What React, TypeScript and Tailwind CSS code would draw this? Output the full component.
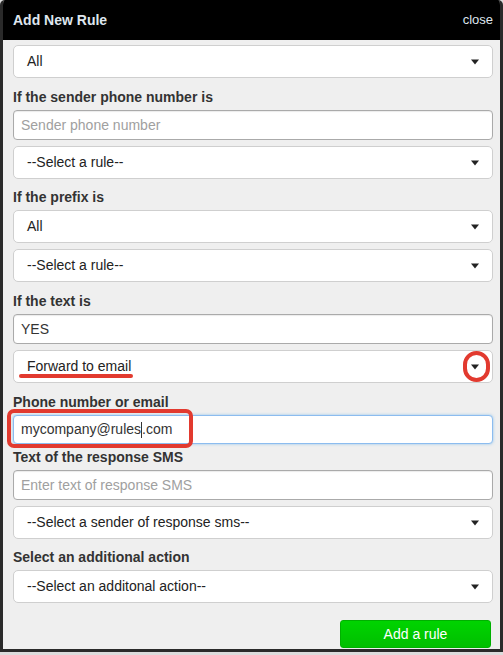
import React from "react";

const font = { fontFamily: '"Liberation Sans", Arial, sans-serif' };

const Caret = () => (
  <span className="absolute right-[13px] top-1/2 -translate-y-1/2 w-0 h-0 border-l-[4px] border-r-[4px] border-t-[5px] border-l-transparent border-r-transparent border-t-[#222]" />
);

const Select = ({ value, className = "" }: { value: string; className?: string }) => (
  <div
    className={`relative flex items-center h-[33px] pl-[13px] bg-white border border-[#cfcfcf] rounded-[5px] text-[14px] text-[#222] ${className}`}
  >
    {value}
    <Caret />
  </div>
);

const Input = ({
  value,
  placeholder,
  className = "",
}: {
  value?: string;
  placeholder?: string;
  className?: string;
}) => (
  <div
    className={`flex items-center h-[30px] pl-[7px] bg-white border border-[#aaa] rounded-[4px] shadow-[inset_0_1px_1px_rgba(0,0,0,0.08)] text-[14px] ${
      value ? "text-[#333]" : "text-[#a0a0a0]"
    } ${className}`}
  >
    {value || placeholder}
  </div>
);

const Label = ({ children, className = "" }: { children: React.ReactNode; className?: string }) => (
  <div className={`h-[20px] leading-[20px] text-[14px] font-bold text-[#333] ${className}`}>{children}</div>
);

export default function App() {
  return (
    <div className="w-[503px] h-[655px] bg-[#dcdcdc]" style={font}>
      <div className="relative h-[652px] border-[3px] border-t-0 border-[#2a2a2a] rounded-t-[5px] bg-[#efefef] overflow-hidden">
        <div className="flex items-center justify-between h-[40px] bg-black pl-[10px] pr-[7px]">
          <span className="text-[14px] font-bold text-[#dfe6ee]">Add New Rule</span>
          <span className="text-[13px] text-[#dfe6ee]">close</span>
        </div>

        <div className="flex flex-col pl-[10px] pr-[7px]">
          <Select value="All" className="mt-[5px]" />

          <Label className="mt-[9px]">If the sender phone number is</Label>
          <Input placeholder="Sender phone number" className="mt-[3px]" />
          <Select value="--Select a rule--" className="mt-[6px]" />

          <Label className="mt-[8px]">If the prefix is</Label>
          <Select value="All" className="mt-[3px]" />
          <Select value="--Select a rule--" className="mt-[6px]" />

          <Label className="mt-[9px]">If the text is</Label>
          <Input value="YES" className="mt-[3px] h-[29px]" />
          <Select value="Forward to email" className="mt-[6px]" />

          <Label className="mt-[9px]">Phone number or email</Label>
          <div className="mt-[3px] flex items-center h-[29px] pl-[7px] bg-white border border-[#8cbcef] rounded-[4px] shadow-[0_0_3px_rgba(82,168,236,0.6)] text-[14px] text-[#333]">
            mycompany@rules<span className="inline-block w-px h-[16px] bg-[#333]" />.com
          </div>

          <Label className="mt-[3px]">Text of the response SMS</Label>
          <Input placeholder="Enter text of response SMS" className="mt-[3px] h-[29px]" />
          <Select value="--Select a sender of response sms--" className="mt-[6px]" />

          <Label className="mt-[8px]">Select an additional action</Label>
          <Select value="--Select an additonal action--" className="mt-[3px]" />

          <div className="flex justify-end mt-[17px] pr-[2px]">
            <button className="w-[151px] h-[28px] rounded-[3px] bg-gradient-to-b from-[#00d400] to-[#00bf00] border border-[#00b000] text-white text-[14px]">
              Add a rule
            </button>
          </div>
        </div>

        {/* annotations */}
        <div className="absolute left-[16px] top-[374px] w-[114px] h-[4px] rounded-full bg-[#e23a2f]" />
        <div className="absolute left-[4px] top-[409px] w-[186px] h-[39px] rounded-[7px] border-[4px] border-[#e23a2f]" />
        <div className="absolute left-[460px] top-[351px] w-[27px] h-[31px] rounded-full border-[4px] border-[#e23a2f]" />
      </div>
    </div>
  );
}
